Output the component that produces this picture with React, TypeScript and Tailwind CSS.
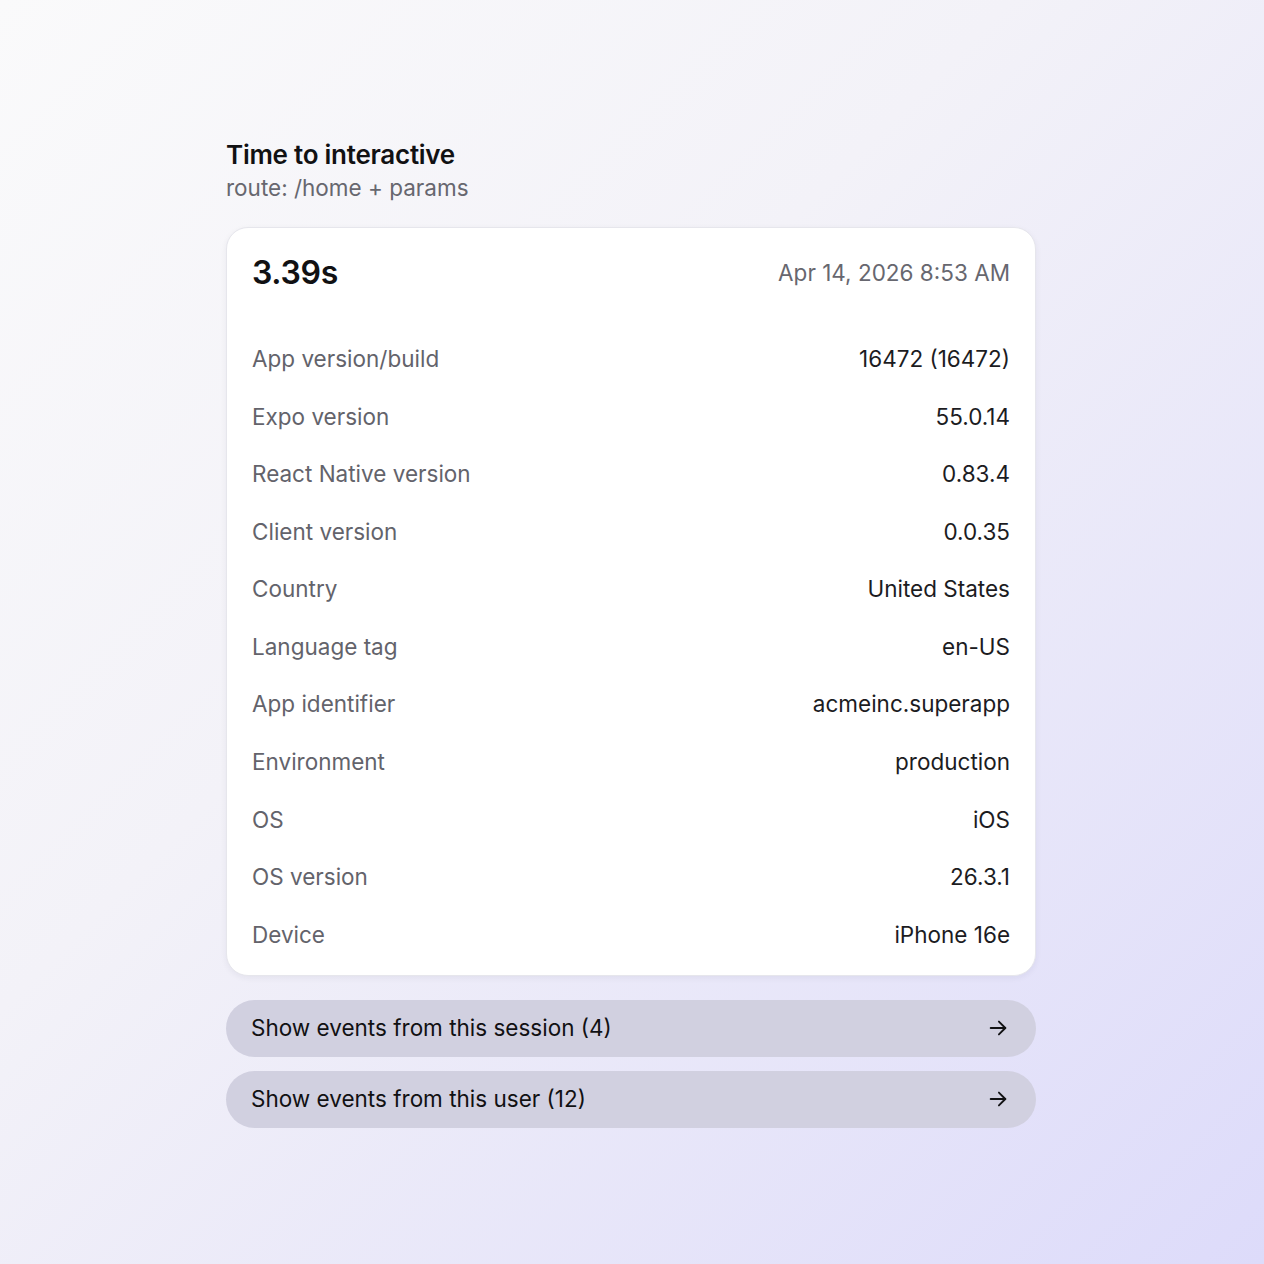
const rows: [string, string][] = [
  ["App version/build", "16472 (16472)"],
  ["Expo version", "55.0.14"],
  ["React Native version", "0.83.4"],
  ["Client version", "0.0.35"],
  ["Country", "United States"],
  ["Language tag", "en-US"],
  ["App identifier", "acmeinc.superapp"],
  ["Environment", "production"],
  ["OS", "iOS"],
  ["OS version", "26.3.1"],
  ["Device", "iPhone 16e"],
];

const links = ["Show events from this session (4)", "Show events from this user (12)"];

function ArrowRight() {
  return (
    <svg width="22" height="22" viewBox="0 0 24 24" fill="none" stroke="currentColor" strokeWidth="2" strokeLinecap="round" strokeLinejoin="round">
      <path d="M4 12h16" />
      <path d="M13 5l7 7-7 7" />
    </svg>
  );
}

export default function App() {
  return (
    <div
      className="min-h-[1264px] w-full bg-[linear-gradient(135deg,#fafafb_0%,#f3f2f8_40%,#dddbfa_100%)] pl-[226px] pt-[137px] text-[#1c1c1f]"
      style={{ fontFamily: "Inter, 'Noto Sans', sans-serif" }}
    >
      <div className="w-[810px]">
        <h1 className="text-[26px] font-semibold leading-[36px] tracking-[-0.01em] text-[#111113]">
          Time to interactive
        </h1>
        <p className="text-[22.5px] leading-[30px] text-[#67676f]">route: /home + params</p>

        <section className="mt-[24px] rounded-[22px] border border-[#e6e6ec] bg-white shadow-[0_2px_6px_rgba(30,30,60,0.06)]">
          <header className="flex h-[90px] items-center justify-between px-[25px]">
            <span className="text-[32px] font-semibold tracking-[-0.01em] text-[#111113]">3.39s</span>
            <span className="text-[22.5px] text-[#67676f]">Apr 14, 2026 8:53 AM</span>
          </header>
          <div className="px-[25px] pb-[11px] pt-[12px]">
            {rows.map(([label, value]) => (
              <div key={label} className="flex h-[57.6px] items-center justify-between text-[22.5px]">
                <span className="text-[#63636b]">{label}</span>
                <span className="text-[#1c1c1f]">{value}</span>
              </div>
            ))}
          </div>
        </section>

        <div className="mt-[24px] flex flex-col gap-[14px]">
          {links.map((l) => (
            <button
              key={l}
              className="flex h-[57px] items-center justify-between rounded-full bg-[#d1d0e0] pl-[25px] pr-[27px] text-left text-[22.5px] text-[#111113]"
            >
              <span>{l}</span>
              <ArrowRight />
            </button>
          ))}
        </div>
      </div>
    </div>
  );
}
